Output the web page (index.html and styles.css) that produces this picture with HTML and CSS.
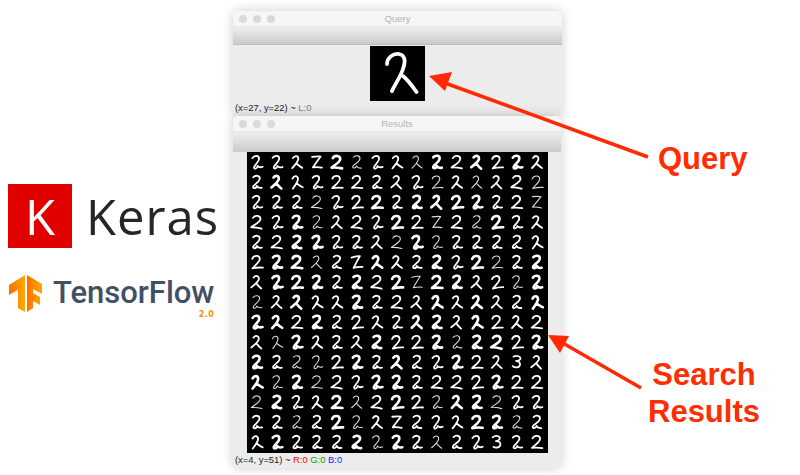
FILE: index.html
```html
<!DOCTYPE html>
<html lang="en">

<head>
  <meta charset="UTF-8" />
  <title>Image search with Keras and TensorFlow</title>
  <link rel="stylesheet" href="styles.css">
</head>

<body>
  <div class="desktop">
    <!-- Logos on the left -->
    <div class="logos">
      <div class="keras">
        <span class="keras-box">K</span>
        <span class="keras-name">Keras</span>
      </div>
      <div class="tf">
        <svg class="tf-mark" width="34" height="38" viewBox="0 0 34 38">
          <defs>
            <linearGradient id="tfGrad" x1="0" y1="0" x2="1" y2="0">
              <stop offset="0" stop-color="#ff6f00" />
              <stop offset="1" stop-color="#ffa800" />
            </linearGradient>
          </defs>
          <path fill="url(#tfGrad)" d="M16 0V37L9 33V15L0 20V10Z" />
          <path fill="url(#tfGrad)" d="M18 0L33 9V19L24 14V18L31 22V30L24 26V33L18 37Z" />
        </svg>
        <div class="tf-text">
          <span class="tf-name">TensorFlow</span>
          <span class="tf-version">2.0</span>
        </div>
      </div>
    </div>

    <!-- Query window -->
    <div class="window window-query">
      <div class="titlebar">
        <div class="lights"><i></i><i></i><i></i></div>
        <span class="title">Query</span>
      </div>
      <div class="toolbar"></div>
      <div class="content">
        <svg class="query-img" width="55" height="55" viewBox="0 0 55 55">
          <path d="M17 18C17 12 23 7 29 8C35 9 36 15 33 23C30 32 25 38 22 45M33 30C38 34 43 41 46.500 46" />
        </svg>
        <div class="status">(x=27, y=22) ~ <span class="grey">L:0</span></div>
      </div>
    </div>

    <!-- Results window -->
    <div class="window window-results">
      <div class="titlebar">
        <div class="lights"><i></i><i></i><i></i></div>
        <span class="title">Results</span>
      </div>
      <div class="toolbar"></div>
      <div class="content">
        <div class="montage" id="montage"></div>
        <div class="status">(x=4, y=51) ~ <span class="red">R:0</span> <span class="green">G:0</span> <span class="blue">B:0</span></div>
      </div>
    </div>

    <!-- Red arrows and labels -->
    <svg class="arrows" width="800" height="475" viewBox="0 0 800 475">
      <path class="shaft" d="M648 157L445 83" />
      <path class="head" d="M429 76L452 72L445 91Z" />
      <path class="shaft" d="M641 388L561 342" />
      <path class="head" d="M548 335L569 336L560 353Z" />
    </svg>
    <div class="label label-query">Query</div>
    <div class="label label-results">Search<br>Results</div>
  </div>

  <script src="script.js"></script>
</body>

</html>
```

FILE: styles.css
```css
* {
  margin: 0;
  padding: 0;
  box-sizing: border-box;
}

body {
  background: white;
  font-family: "Liberation Sans", Arial, sans-serif;
}

.desktop {
  position: relative;
  width: 800px;
  height: 475px;
  overflow: hidden;
}

/* Logos */
.logos {
  position: absolute;
  left: 8px;
  top: 184px;
  width: 212px;
  display: flex;
  flex-direction: column;
  gap: 27px;
}

.keras {
  display: flex;
  align-items: center;
  gap: 14px;
}

.keras-box {
  width: 64px;
  height: 64px;
  background: #e00000;
  color: white;
  font-family: "Open Sans", sans-serif;
  font-size: 49px;
  line-height: 64px;
  text-align: center;
}

.keras-name {
  color: #262626;
  font-family: "Open Sans", sans-serif;
  font-size: 49px;
  letter-spacing: 1px;
  line-height: 64px;
}

.tf {
  display: flex;
  align-items: flex-start;
  gap: 10px;
  margin-left: 1px;
}

.tf-text {
  display: flex;
  flex-direction: column;
  align-items: flex-end;
}

.tf-name {
  color: #425066;
  font-family: Roboto, sans-serif;
  font-size: 31px;
  font-weight: 500;
  line-height: 36px;
}

.tf-version {
  color: #ff9000;
  font-family: "DejaVu Sans", sans-serif;
  font-size: 8px;
  font-weight: bold;
  line-height: 8px;
  letter-spacing: 0.5px;
}

/* Windows */
.window {
  position: absolute;
  left: 233px;
  background: #ececec;
  border-radius: 5px;
  box-shadow: 0 0 12px rgba(0, 0, 0, 0.2);
  overflow: hidden;
  display: flex;
  flex-direction: column;
}

.window-query {
  top: 11px;
  width: 329px;
  height: 104px;
}

.window-results {
  top: 116px;
  width: 328px;
  height: 352px;
}

.titlebar {
  position: relative;
  height: 16px;
  background: #f6f6f6;
  border-bottom: 1px solid #e6e6e6;
  display: flex;
  align-items: center;
  justify-content: center;
}

.lights {
  position: absolute;
  left: 6px;
  top: 4px;
  display: flex;
  gap: 6px;
}

.lights i {
  width: 8px;
  height: 8px;
  border-radius: 50%;
  background: #dadada;
}

.title {
  color: #b4b4b4;
  font-size: 9.500px;
}

.toolbar {
  height: 19px;
  background: linear-gradient(#efefef, #cacaca);
  border-bottom: 1px solid #bdbdbd;
}

.window-results .toolbar {
  height: 20px;
  border-bottom: none;
}

.content {
  flex: 1;
  display: flex;
  flex-direction: column;
  align-items: center;
}

.status {
  align-self: flex-start;
  padding-left: 2px;
  color: #222;
  font-size: 9.400px;
  line-height: 14px;
}

.grey { color: #808080; }
.red { color: #f00; }
.green { color: #00a000; }
.blue { color: #1a1aff; }

.query-img {
  display: block;
  background: black;
  margin: 1px 0 0;
}

.query-img path {
  fill: none;
  stroke: white;
  stroke-width: 3.800;
  stroke-linecap: round;
  stroke-linejoin: round;
  filter: blur(0.7px);
}

/* Grid of digit images */
.montage {
  width: 301px;
  height: 301px;
  background: black;
  display: grid;
  grid-template-columns: repeat(15, 20px);
  grid-auto-rows: 20px;
  margin: 0 0 0 1px;
  filter: blur(0.4px);
}

.digit {
  display: block;
}

.digit path {
  fill: none;
  stroke: white;
  stroke-linecap: round;
  stroke-linejoin: round;
}

.digit.thin path { stroke-width: 1.100; stroke: #ddd; }
.digit.mid path { stroke-width: 1.800; }
.digit.thick path { stroke-width: 2.600; }

/* Annotations */
.arrows {
  position: absolute;
  left: 0;
  top: 0;
}

.shaft {
  stroke: #ff2a00;
  stroke-width: 3.500;
  fill: none;
}

.head {
  fill: #ff2a00;
}

.label {
  position: absolute;
  color: #ff2d00;
  font-size: 31px;
  font-weight: bold;
  line-height: 37px;
  text-align: center;
}

.label-query {
  left: 658px;
  top: 140px;
}

.label-results {
  left: 648px;
  top: 356px;
}
```

FILE: script.js
```js
// Stroke shapes of the handwritten digits, in a 20x20 cell
const shapes = {
  a: "M6 5.5C8 3 13 3 12.5 7C12 10 8 12 6.5 14.5C5.5 17 9.5 17 10 14C11 15.5 13 16 15 15.5",
  b: "M5.5 6.500C7 3 13 3 13 7C13 10 8 13 5 16C8 15.500 12 15.500 15.500 16",
  c: "M6 6C8 3 11.500 3.500 11.500 7C11 10 8 13 5 16M9.500 11.500C11 13 13 15 15 16",
  d: "M5 5C8 4.500 11 4 13.500 4.500C11 8 9 11 6 15.500C9 15 12 15 15 15.500",
  e: "M6 5C9 3 14 4 13 7C12 9 9 9 9 9C12 9 14 11 13 13.500C12 16 8 16 6 14.500",
};

// Lower case is a normal stroke, upper case a heavy one.
// t, u, v and w are thin versions of a, b, c and d; 3 is the odd three.
const rows = [
  "aacdBtacvAbCbAc",
  "aCcabbacaucvcbu",
  "aaauabBaACBAabw",
  "baAtcbaBbwbtBac",
  "abAAaacuAtaaaac",
  "bABvadCcaAaBuaA",
  "cABAaAbBwBAcbtA",
  "tcCccAabcCcCcaC",
  "ACbAabcaCAcCbcb",
  "cvAcacAbbAtABbA",
  "AattbAaCaaAbc3c",
  "CtAubaAAabbbAbb",
  "uAacBvbBbtCAuaa",
  "aataBtcdaacBAta",
  "cAaaaAtAavaa3ab",
];

const thinMap = { t: "a", u: "b", v: "c", w: "d" };
const montage = document.getElementById("montage");
let n = 0;

rows.forEach((row) => {
  for (const ch of row) {
    let shape = ch.toLowerCase();
    let weight = ch === shape ? "mid" : "thick";

    if (thinMap[ch]) {
      shape = thinMap[ch];
      weight = "thin";
    }
    if (ch === "3") {
      shape = "e";
      weight = "mid";
    }

    // A small slant per cell, so that the same shape does not repeat exactly
    const slant = ((n * 37) % 17) - 8;
    n++;

    montage.insertAdjacentHTML(
      "beforeend",
      `<svg class="digit ${weight}" width="20" height="20" viewBox="0 0 20 20"><path transform="rotate(${slant} 10 10)" d="${shapes[shape]}" /></svg>`
    );
  }
});
```
